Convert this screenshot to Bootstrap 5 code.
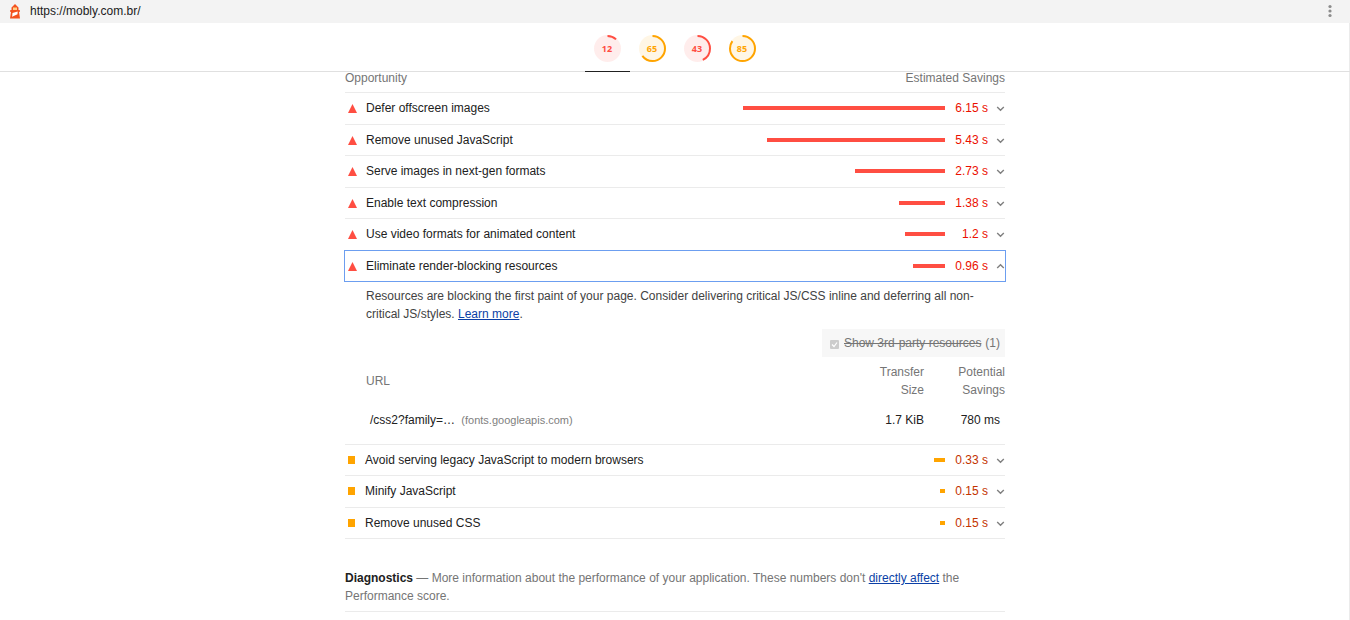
<!DOCTYPE html>
<html lang="en">
<head>
<meta charset="utf-8">
<meta name="viewport" content="width=device-width, initial-scale=1">
<title>Performance report - mobly.com.br</title>
<link href="https://cdn.jsdelivr.net/npm/bootstrap@5.3.0/dist/css/bootstrap.min.css" rel="stylesheet">
<style>
  :root { --fail: #ff4e42; --fail-text: #eb0f00; --average: #ffa400; --average-text: #c33300; --rule: #ebebeb; --muted: #757575; }
  body { font: 12px/18px "Liberation Sans", Arial, sans-serif; color: #212121; background: #fff; }
  a { color: #0b3fa6; }
  .report { min-height: 100vh; box-shadow: inset -1px 0 #ebebeb; overflow: hidden; }
  .topbar { height: 23px; background: #f3f3f3; color: #212121; padding: 0 16px 1px 8px; }
  .topbar a { color: inherit; }
  .menu-btn { width: 8px; height: 18px; }
  .scores { height: 49px; border-bottom: 1px solid #e0e0e0; }
  .scores a { width: 45px; height: 49px; border-bottom: 1px solid transparent; padding-top: 12px; }
  .scores a.active { border-color: #212121; }
  .gauge text { font: bold 9px "Noto Sans", sans-serif; text-anchor: middle; }
  .is-fail .gauge { color: var(--fail); }
  .is-average .gauge { color: var(--average); }
  .audits { max-width: 660px; }
  .muted { color: var(--muted); }
  .list-head { line-height: 12px; padding-bottom: 8px; border-bottom: 1px solid var(--rule); }
  .audit { border-bottom: 1px solid var(--rule); }
  .audit > summary { height: 30px; list-style: none; }
  .passes-odd .audit:nth-child(odd) > summary,
  .passes-even .audit:nth-child(even) > summary { height: 31px; padding-bottom: 1px; }
  .audit > summary::-webkit-details-marker { display: none; }
  .audit[open] { padding-bottom: 15px; }
  .audit[open] > summary { outline: 1px solid #6c9ef0; }
  .audit[open] .chev { transform: rotate(180deg); }
  .audit .marker { width: 21px; padding-left: 3px; line-height: 0; }
  .is-average .marker { width: 20px; }
  .bar-track { width: 202px; }
  .bar-fill { height: 4px; background: var(--fail); }
  .is-average .bar-fill { background: var(--average); }
  .saving { width: 43px; color: var(--fail-text); }
  .is-average .saving { color: var(--average-text); }
  .chev-box { width: 17px; line-height: 0; padding-top: 2px; }
  .audit[open] .chev-box { padding-top: 0; }
  .details-body { padding: 6px 0 0 21px; color: #424242; }
  .third-party { width: 183px; height: 28px; background: #f7f7f7; padding: 0 5px 0 8px; margin: 6px 0 6px auto; }
  .third-party input { appearance: none; width: 9px; height: 9px; background: #ccc; border-radius: 1px; margin: 2px 5px 0 0; }
  .tick-box { position: relative; line-height: 0; }
  .tick-box svg { position: absolute; left: 1px; top: 3px; pointer-events: none; }
  .results th { font-weight: 400; color: var(--muted); padding: 0; vertical-align: middle; }
  .results td { color: #212121; padding: 12px 0 0; }
  .results .url { padding-left: 4px; }
  .results .host { color: #808080; font-size: 11px; margin-left: 3px; }
  .col-size { width: 60px; }
  .col-save { width: 81px; padding-left: 30px; }
  .results td.col-save { padding-right: 5px; }
  .diagnostics { margin-top: 30px; padding-bottom: 6px; border-bottom: 1px solid var(--rule); color: var(--muted); }
  .diagnostics strong { color: #212121; }
</style>
</head>
<body>
<div class="report">
  <header class="topbar d-flex align-items-center">
    <svg width="14" height="16" viewBox="0 0 14 16" aria-hidden="true">
      <path d="M3.500 4.500 7 1l3.500 3.500V7h1.300v2h-.8l1 6.500H2L3 9h-.8V7h1.300z" fill="#f4511e"/>
      <path d="M5 4.500h4V7H5z" fill="#ffd083"/>
      <path d="m4.500 10 5.200-1.500-.2 2.700-5.400 2.600z" fill="#fff"/>
    </svg>
    <a class="text-decoration-none ms-2" href="https://mobly.com.br/">https://mobly.com.br/</a>
    <button class="menu-btn btn p-0 border-0 ms-auto d-flex align-items-center" type="button" aria-label="Tools menu">
      <svg width="8" height="16" viewBox="0 0 8 16" fill="#8c8c8c"><circle cx="4" cy="3.500" r="1.600"/><circle cx="4" cy="8" r="1.600"/><circle cx="4" cy="12.500" r="1.600"/></svg>
    </button>
  </header>

  <nav class="scores d-flex justify-content-center" aria-label="Category scores">
    <a href="#performance" class="is-fail active d-flex justify-content-center"><svg class="gauge" width="27" height="27" viewBox="0 0 27 27" fill="currentColor"><circle cx="13.500" cy="13.500" r="13.500" opacity=".1"/><circle cx="13.500" cy="13.500" r="12.500" fill="none" stroke="currentColor" stroke-width="2" pathLength="100" stroke-dasharray="12 100" transform="rotate(-90 13.500 13.500)"/><text x="13" y="17">12</text></svg></a>
    <a href="#accessibility" class="is-average d-flex justify-content-center"><svg class="gauge" width="27" height="27" viewBox="0 0 27 27" fill="currentColor"><circle cx="13.500" cy="13.500" r="13.500" opacity=".1"/><circle cx="13.500" cy="13.500" r="12.500" fill="none" stroke="currentColor" stroke-width="2" pathLength="100" stroke-dasharray="65 100" transform="rotate(-90 13.500 13.500)"/><text x="13" y="17">65</text></svg></a>
    <a href="#best-practices" class="is-fail d-flex justify-content-center"><svg class="gauge" width="27" height="27" viewBox="0 0 27 27" fill="currentColor"><circle cx="13.500" cy="13.500" r="13.500" opacity=".1"/><circle cx="13.500" cy="13.500" r="12.500" fill="none" stroke="currentColor" stroke-width="2" pathLength="100" stroke-dasharray="43 100" transform="rotate(-90 13.500 13.500)"/><text x="13" y="17">43</text></svg></a>
    <a href="#seo" class="is-average d-flex justify-content-center"><svg class="gauge" width="27" height="27" viewBox="0 0 27 27" fill="currentColor"><circle cx="13.500" cy="13.500" r="13.500" opacity=".1"/><circle cx="13.500" cy="13.500" r="12.500" fill="none" stroke="currentColor" stroke-width="2" pathLength="100" stroke-dasharray="85 100" transform="rotate(-90 13.500 13.500)"/><text x="13" y="17">85</text></svg></a>
  </nav>

  <main class="audits mx-auto" id="performance">
    <div class="list-head muted d-flex justify-content-between"><span>Opportunity</span><span>Estimated Savings</span></div>

    <section class="passes-odd">
      <details class="audit is-fail"><summary class="d-flex align-items-center"><span class="marker"><svg width="9" height="9"><path d="M4.500 0 9 9H0z" fill="#ff4e42"/></svg></span><span class="flex-grow-1">Defer offscreen images</span><span class="bar-track"><span class="bar-fill d-block ms-auto" style="width:202px"></span></span><span class="saving text-end">6.15 s</span><span class="chev-box text-end"><svg class="chev" width="9" height="6"><path d="m1.200 1 3.300 3.300L7.800 1" fill="none" stroke="#808080" stroke-width="1.400"/></svg></span></summary></details>
      <details class="audit is-fail"><summary class="d-flex align-items-center"><span class="marker"><svg width="9" height="9"><path d="M4.500 0 9 9H0z" fill="#ff4e42"/></svg></span><span class="flex-grow-1">Remove unused JavaScript</span><span class="bar-track"><span class="bar-fill d-block ms-auto" style="width:178px"></span></span><span class="saving text-end">5.43 s</span><span class="chev-box text-end"><svg class="chev" width="9" height="6"><path d="m1.200 1 3.300 3.300L7.800 1" fill="none" stroke="#808080" stroke-width="1.400"/></svg></span></summary></details>
      <details class="audit is-fail"><summary class="d-flex align-items-center"><span class="marker"><svg width="9" height="9"><path d="M4.500 0 9 9H0z" fill="#ff4e42"/></svg></span><span class="flex-grow-1">Serve images in next-gen formats</span><span class="bar-track"><span class="bar-fill d-block ms-auto" style="width:90px"></span></span><span class="saving text-end">2.73 s</span><span class="chev-box text-end"><svg class="chev" width="9" height="6"><path d="m1.200 1 3.300 3.300L7.800 1" fill="none" stroke="#808080" stroke-width="1.400"/></svg></span></summary></details>
      <details class="audit is-fail"><summary class="d-flex align-items-center"><span class="marker"><svg width="9" height="9"><path d="M4.500 0 9 9H0z" fill="#ff4e42"/></svg></span><span class="flex-grow-1">Enable text compression</span><span class="bar-track"><span class="bar-fill d-block ms-auto" style="width:46px"></span></span><span class="saving text-end">1.38 s</span><span class="chev-box text-end"><svg class="chev" width="9" height="6"><path d="m1.200 1 3.300 3.300L7.800 1" fill="none" stroke="#808080" stroke-width="1.400"/></svg></span></summary></details>
      <details class="audit is-fail"><summary class="d-flex align-items-center"><span class="marker"><svg width="9" height="9"><path d="M4.500 0 9 9H0z" fill="#ff4e42"/></svg></span><span class="flex-grow-1">Use video formats for animated content</span><span class="bar-track"><span class="bar-fill d-block ms-auto" style="width:40px"></span></span><span class="saving text-end">1.2 s</span><span class="chev-box text-end"><svg class="chev" width="9" height="6"><path d="m1.200 1 3.300 3.300L7.800 1" fill="none" stroke="#808080" stroke-width="1.400"/></svg></span></summary></details>
      <details class="audit is-fail" open><summary class="d-flex align-items-center"><span class="marker"><svg width="9" height="9"><path d="M4.500 0 9 9H0z" fill="#ff4e42"/></svg></span><span class="flex-grow-1">Eliminate render-blocking resources</span><span class="bar-track"><span class="bar-fill d-block ms-auto" style="width:32px"></span></span><span class="saving text-end">0.96 s</span><span class="chev-box text-end"><svg class="chev" width="9" height="6"><path d="m1.200 1 3.300 3.300L7.800 1" fill="none" stroke="#808080" stroke-width="1.400"/></svg></span></summary>
        <div class="details-body">
          <p class="mb-0">Resources are blocking the first paint of your page. Consider delivering critical JS/CSS inline and deferring all non-critical JS/styles. <a href="#learn">Learn more</a>.</p>
          <div class="third-party muted d-flex align-items-center">
            <span class="tick-box"><input type="checkbox" id="third" checked disabled><svg width="7" height="7"><path d="m1 3.500 2 2 3-4" fill="none" stroke="#fff" stroke-width="1.200"/></svg></span>
            <label for="third"><s>Show 3rd-party resources</s></label><span class="ms-auto">(1)</span>
          </div>
          <table class="results w-100">
            <thead><tr><th scope="col">URL</th><th scope="col" class="col-size text-end">Transfer Size</th><th scope="col" class="col-save text-end">Potential Savings</th></tr></thead>
            <tbody><tr><td class="url">/css2?family=… <span class="host">(fonts.googleapis.com)</span></td><td class="text-end">1.7 KiB</td><td class="col-save text-end">780 ms</td></tr></tbody>
          </table>
        </div>
      </details>
    </section>
    <section class="passes-even">
      <details class="audit is-average"><summary class="d-flex align-items-center"><span class="marker"><svg width="7" height="8"><path d="M0 0h7v8H0z" fill="#ffa400"/></svg></span><span class="flex-grow-1">Avoid serving legacy JavaScript to modern browsers</span><span class="bar-track"><span class="bar-fill d-block ms-auto" style="width:11px"></span></span><span class="saving text-end">0.33 s</span><span class="chev-box text-end"><svg class="chev" width="9" height="6"><path d="m1.200 1 3.300 3.300L7.800 1" fill="none" stroke="#808080" stroke-width="1.400"/></svg></span></summary></details>
      <details class="audit is-average"><summary class="d-flex align-items-center"><span class="marker"><svg width="7" height="8"><path d="M0 0h7v8H0z" fill="#ffa400"/></svg></span><span class="flex-grow-1">Minify JavaScript</span><span class="bar-track"><span class="bar-fill d-block ms-auto" style="width:5px"></span></span><span class="saving text-end">0.15 s</span><span class="chev-box text-end"><svg class="chev" width="9" height="6"><path d="m1.200 1 3.300 3.300L7.800 1" fill="none" stroke="#808080" stroke-width="1.400"/></svg></span></summary></details>
      <details class="audit is-average"><summary class="d-flex align-items-center"><span class="marker"><svg width="7" height="8"><path d="M0 0h7v8H0z" fill="#ffa400"/></svg></span><span class="flex-grow-1">Remove unused CSS</span><span class="bar-track"><span class="bar-fill d-block ms-auto" style="width:5px"></span></span><span class="saving text-end">0.15 s</span><span class="chev-box text-end"><svg class="chev" width="9" height="6"><path d="m1.200 1 3.300 3.300L7.800 1" fill="none" stroke="#808080" stroke-width="1.400"/></svg></span></summary></details>
    </section>

    <p class="diagnostics mb-0"><strong>Diagnostics</strong> — More information about the performance of your application. These numbers don't <a href="#scoring">directly affect</a> the Performance score.</p>
  </main>
</div>
<script src="https://cdn.jsdelivr.net/npm/bootstrap@5.3.0/dist/js/bootstrap.bundle.min.js"></script>
</body>
</html>
